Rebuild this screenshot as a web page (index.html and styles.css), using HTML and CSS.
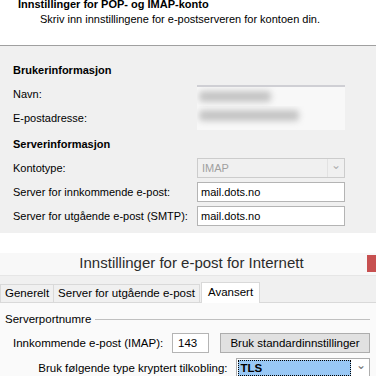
FILE: index.html
```html
<!DOCTYPE html>
<html>
<head>
	<title>Innstillinger for POP- og IMAP-konto</title>
	<meta charset="utf-8">
	<link rel="stylesheet" href="styles.css">
</head>
<body>
	<div class="top">
		<h1>Innstillinger for POP- og IMAP-konto</h1>
		<p>Skriv inn innstillingene for e-postserveren for kontoen din.</p>
	</div>
	<div class="form">
		<h2>Brukerinformasjon</h2>
		<div class="row">
			<label>Navn:</label>
			<div class="field blurred first"><span class="blob name"></span></div>
		</div>
		<div class="row">
			<label>E-postadresse:</label>
			<div class="field blurred"><span class="blob mail"></span></div>
		</div>
		<h2 class="second">Serverinformasjon</h2>
		<div class="row">
			<label>Kontotype:</label>
			<div class="field combo disabled"><span class="value">IMAP</span><span class="arrow">&#8964;</span></div>
		</div>
		<div class="row">
			<label>Server for innkommende e-post:</label>
			<div class="field input">mail.dots.no</div>
		</div>
		<div class="row">
			<label>Server for utgående e-post (SMTP):</label>
			<div class="field input">mail.dots.no</div>
		</div>
	</div>
	<div class="gap"></div>
	<div class="dialog">
		<div class="titlebar">
			<div class="title">Innstillinger for e-post for Internett</div>
			<div class="close"></div>
		</div>
		<div class="tabs">
			<div class="tab">Generelt</div>
			<div class="tab">Server for utgående e-post</div>
			<div class="tab on">Avansert</div>
		</div>
		<div class="page">
			<div class="legend"><span>Serverportnumre</span><i></i></div>
			<div class="drow">
				<label class="imap">Innkommende e-post (IMAP):</label>
				<div class="port">143</div>
				<div class="btn">Bruk standardinnstillinger</div>
			</div>
			<div class="drow">
				<label class="enc">Bruk følgende type kryptert tilkobling:</label>
				<div class="select"><span class="sel">TLS</span><span class="arrow">&#8964;</span></div>
			</div>
		</div>
	</div>
</body>
</html>
```

FILE: styles.css
```css
*{margin: 0;padding: 0;box-sizing: border-box;}
html,body{width: 376px;height: 376px;overflow: hidden;background: #fff;}
body{font-family: "Liberation Sans", Arial, sans-serif;font-size: 11px;color: #000;}

.top{height: 46px;border-bottom: 1px solid #a0a0a0;background: #fff;overflow: hidden;}
.top h1{font-size: 11px;font-weight: bold;line-height: 13px;margin-top: -2px;padding-left: 18px;}
.top p{line-height: 13px;margin-top: 2px;padding-left: 40px;}

.form{background: #f0f0f0;padding: 12px 0 5px 13px;}
.form h2{font-size: 11px;font-weight: bold;height: 24px;line-height: 24px;}
.form h2.second{margin-top: 2px;}
.row{display: flex;align-items: center;height: 24px;}
.row label{width: 184px;white-space: nowrap;}
.field{width: 148px;height: 20px;}
.blurred{background: #f8f8f8;height: 24px;padding: 4px 2px;overflow: hidden;}
.blurred.first{border-top: 2px solid #cfcfd4;margin-top: 4px;height: 22px;}
.blob{display: block;height: 11px;background: #c4c4c4;filter: blur(3px);border-radius: 4px;}
.blob.name{width: 72px;}
.blob.mail{width: 100px;}
.input{background: #fff;border: 1px solid #b4b4b4;padding-left: 3px;line-height: 18px;font-size: 11px;}
.combo{display: flex;border: 1px solid #ccc;background: #f0f0f0;}
.combo .value{flex: 1;color: #a0a0a0;padding-left: 4px;line-height: 18px;}
.combo .arrow{width: 17px;border-left: 1px solid #e2e2e2;color: #b0b0b0;text-align: center;font-size: 12px;line-height: 12px;}

.gap{height: 20px;background: #fff;}

.dialog{background: #f0f0f0;}
.titlebar{display: flex;height: 23px;background: #f8f8f8;border-bottom: 1px solid #e6e6e6;}
.title{flex: 1;text-align: center;padding-left: 16px;font-size: 15px;line-height: 20px;color: #2b2b2b;white-space: nowrap;}
.close{width: 9px;height: 17px;margin-top: 2px;background: #c75050;}
.tabs{display: flex;align-items: flex-end;height: 27px;border-bottom: 1px solid #d9d9d9;font-size: 11.5px;}
.tab{height: 18px;line-height: 16px;padding: 0 4px;border: 1px solid #d9d9d9;border-bottom: none;background: #f0f0f0;margin-left: -1px;white-space: nowrap;}
.tab:first-child{margin-left: 0;}
.tab.on{height: 21px;line-height: 18px;background: #fff;margin-bottom: -1px;margin-left: 1px;padding: 0 6px;}

.page{background: #fafafa;padding: 8px 6px 0 5px;font-size: 11.5px;height: 100px;}
.legend{display: flex;align-items: center;height: 16px;white-space: nowrap;}
.legend i{flex: 1;height: 1px;background: #c0c0c0;margin-left: 4px;}
.drow{display: flex;align-items: center;height: 20px;margin-top: 6px;white-space: nowrap;}
.drow + .drow{margin-top: 5px;}
.drow label.imap{width: 168px;padding-left: 8px;}
.drow label.enc{width: 225px;text-align: right;}
.port{width: 37px;height: 20px;background: #fff;border: 1px solid #b4b4b4;padding-left: 5px;line-height: 18px;}
.btn{width: 151px;height: 20px;margin-left: 11px;background: #e1e1e1;border: 1px solid #adadad;text-align: center;line-height: 18px;}
.select{display: flex;width: 135px;height: 20px;margin-left: 9px;border: 1px solid #adadad;background: #fff;}
.select .sel{flex: 1;margin: 1px;background: #99c8f5;border: 1px dotted #000;font-weight: bold;line-height: 14px;padding-left: 1px;}
.select .arrow{width: 17px;color: #707070;text-align: center;font-size: 12px;line-height: 12px;}
```
